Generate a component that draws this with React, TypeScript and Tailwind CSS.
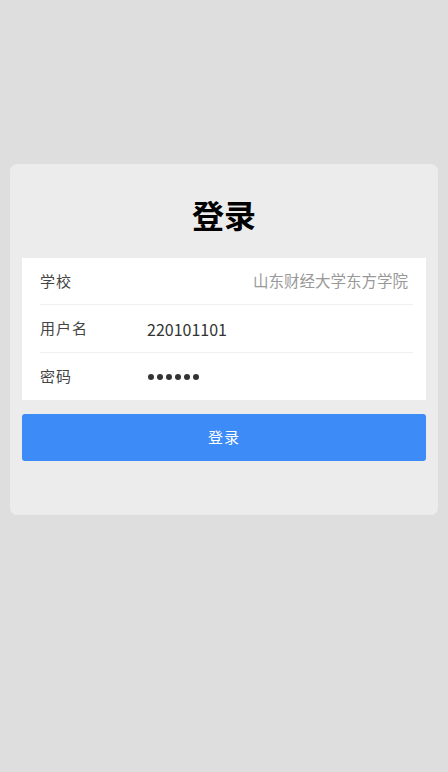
const font = { fontFamily: '"Noto Sans CJK SC", "Noto Sans", sans-serif' };

function Row({ label, children, last, h }: { label: string; children?: React.ReactNode; last?: boolean; h: string }) {
  return (
    <div className={`flex items-center ${h} mr-[13px] ${last ? '' : 'border-b border-[#f0f0f0]'}`}>
      <div className="w-[107px] text-[15px] text-[#444] tracking-[1px]">{label}</div>
      <div className="flex-1 flex items-center">{children}</div>
    </div>
  );
}

export default function App() {
  return (
    <div className="min-h-[772px] bg-[#dedede] pt-[164px]" style={font}>
      <div className="mx-[10px] bg-[#ececec] rounded-[7px] px-[12px] pb-[54px]">
        <div className="h-[94px] flex items-center justify-center pt-[6px]">
          <span className="text-[32px] font-bold text-black leading-none">登录</span>
        </div>

        <div className="bg-white pl-[18px]">
          <Row label="学校" h="h-[47px]">
            <span className="ml-auto mr-[5px] text-[15.5px] text-[#999]">山东财经大学东方学院</span>
          </Row>
          <Row label="用户名" h="h-[48px]">
            <span className="text-[16px] text-[#333]">220101101</span>
          </Row>
          <Row label="密码" h="h-[47px]" last>
            <div className="flex gap-[3px] ml-[1px]">
              {[0, 1, 2, 3, 4, 5].map((i) => (
                <span key={i} className="w-[6px] h-[6px] rounded-full bg-[#333]" />
              ))}
            </div>
          </Row>
        </div>

        <button className="mt-[14px] w-full h-[47px] bg-[#3c8bf6] rounded-[3px] text-white text-[15px] tracking-[1px]">
          登录
        </button>
      </div>
    </div>
  );
}
